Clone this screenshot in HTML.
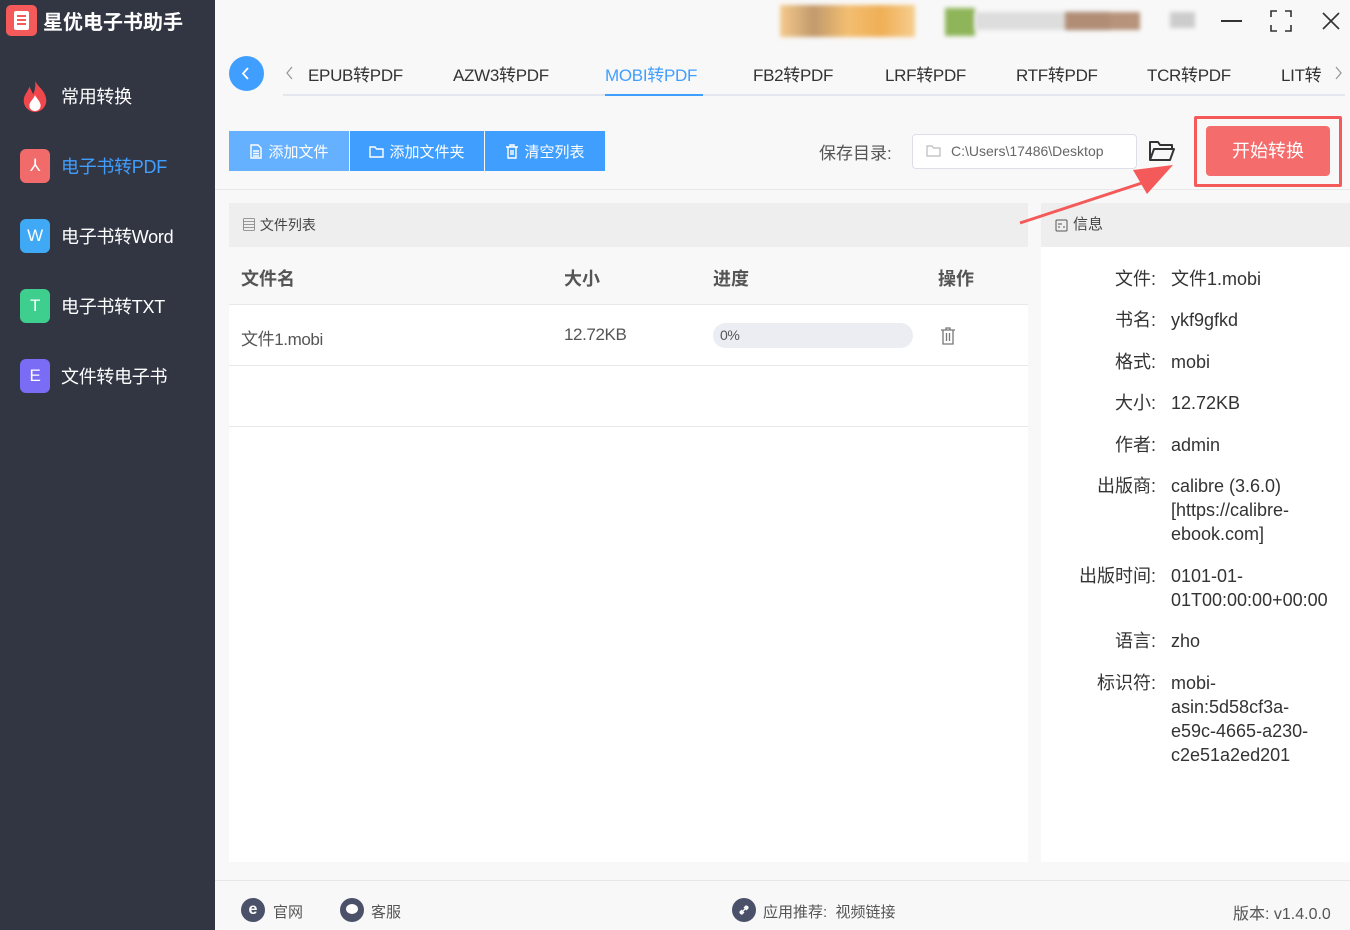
<!DOCTYPE html>
<html><head><meta charset="utf-8"><style>
*{margin:0;padding:0;box-sizing:border-box}
body{width:1350px;height:930px;overflow:hidden;background:#f8f8f8;font-family:"Liberation Sans","Noto Sans CJK SC",sans-serif;position:relative;color:#333}
.a{position:absolute}
.side{left:0;top:0;width:215px;height:930px;background:#323643}
.nav{left:20px;font-size:18px;color:#fff;display:flex;align-items:center;letter-spacing:-0.3px}
.ic{width:30px;height:34px;border-radius:6px;margin-right:11px;color:#fff;font-size:17px;display:flex;align-items:center;justify-content:center}
.tab{top:61px;font-size:17px;color:#333;letter-spacing:-0.3px}
.btn{top:131px;height:40px;background:#409eff;color:#fff;font-size:15px;display:flex;align-items:center;justify-content:center;gap:5px}
.info{font-size:18px;color:#333;line-height:24px}
.lab{position:absolute;right:194px;text-align:right;white-space:nowrap}
.val{position:absolute;left:1171px;width:170px}
</style></head><body>
<div class="a side"></div>
<div class="a" style="left:6px;top:5px;width:31px;height:31px;background:#f55a5a;border-radius:5px"><div style="position:absolute;left:8px;top:6px;width:15px;height:19px;background:#fff;border-radius:2px"></div><div style="position:absolute;left:11px;top:10px;width:9px;height:2px;background:#f55a5a;box-shadow:0 4px #f55a5a,0 8px #f55a5a"></div></div>
<div class="a" style="left:43px;top:6px;font-size:20px;font-weight:bold;color:#fff">星优电子书助手</div>
<div class="a nav" style="top:79px"><div class="ic" style="background:transparent"><svg width="32" height="36" viewBox="0 0 32 36"><path d="M16 1C18 8 28 12 28 23 28 30 22 35 16 35 10 35 4 30 4 23 4 16 9 13 10 8 12 12 13 14 14 16 16 12 17 6 16 1Z" fill="#f0474c"/><path d="M16 17C18 21 22 24 22 28 22 32 19 34 16 34 13 34 10 32 10 28 10 24 14 22 16 17Z" fill="#fff"/></svg></div>常用转换</div>
<div class="a nav" style="top:149px;color:#409eff"><div class="ic" style="background:#f26b6b">⅄</div>电子书转PDF</div>
<div class="a nav" style="top:219px"><div class="ic" style="background:#3fa9f5">W</div>电子书转Word</div>
<div class="a nav" style="top:289px"><div class="ic" style="background:#3ecf8e">T</div>电子书转TXT</div>
<div class="a nav" style="top:359px"><div class="ic" style="background:#7b6cf6">E</div>文件转电子书</div>

<div class="a" style="left:780px;top:5px;width:135px;height:32px;background:linear-gradient(90deg,#f6c27a,#b88a55,#f2b45a,#eea33a,#f7c77e);filter:blur(2px);opacity:.85"></div>
<div class="a" style="left:945px;top:8px;width:30px;height:28px;background:#8fb55a;filter:blur(2px)"></div>
<div class="a" style="left:975px;top:12px;width:135px;height:18px;background:#ddd;filter:blur(2px)"></div>
<div class="a" style="left:1065px;top:12px;width:75px;height:18px;background:#a77a5c;filter:blur(2px);opacity:.8"></div>
<div class="a" style="left:1170px;top:12px;width:25px;height:16px;background:#ccc;filter:blur(2px)"></div>
<div class="a" style="left:1221px;top:20px;width:21px;height:2px;background:#333"></div>
<svg class="a" style="left:1270px;top:10px" width="22" height="22"><path d="M1 7V1H7M15 1H21V7M21 15V21H15M7 21H1V15" fill="none" stroke="#333" stroke-width="1.6"/></svg>
<svg class="a" style="left:1322px;top:12px" width="18" height="18"><path d="M1 1L17 17M17 1L1 17" stroke="#333" stroke-width="1.6"/></svg>

<div class="a" style="left:229px;top:56px;width:35px;height:35px;border-radius:50%;background:#409eff"><svg width="35" height="35"><path d="M19 12L14 17.5L19 23" fill="none" stroke="#fff" stroke-width="1.8"/></svg></div>
<svg class="a" style="left:284px;top:65px" width="10" height="16"><path d="M8 2L3 8L8 14" fill="none" stroke="#999" stroke-width="1.3"/></svg>
<svg class="a" style="left:1334px;top:65px" width="10" height="16"><path d="M2 2L7 8L2 14" fill="none" stroke="#999" stroke-width="1.3"/></svg>
<div class="a" style="left:283px;top:94px;width:1062px;height:2px;background:#e4e7ed"></div>
<div class="a tab" style="left:308px">EPUB转PDF</div>
<div class="a tab" style="left:453px">AZW3转PDF</div>
<div class="a tab" style="left:605px;color:#409eff">MOBI转PDF</div>
<div class="a" style="left:605px;top:94px;width:98px;height:2px;background:#409eff"></div>
<div class="a tab" style="left:753px">FB2转PDF</div>
<div class="a tab" style="left:885px">LRF转PDF</div>
<div class="a tab" style="left:1016px">RTF转PDF</div>
<div class="a tab" style="left:1147px">TCR转PDF</div>
<div class="a tab" style="left:1281px">LIT转</div>

<div class="a btn" style="left:229px;width:120px;background:#66b1ff"><svg width="14" height="15"><path d="M2 1H9L12 4V14H2Z M4 7H10M4 9.5H10M4 12H10" fill="none" stroke="#fff" stroke-width="1.4"/></svg>添加文件</div>
<div class="a btn" style="left:350px;width:134px"><svg width="15" height="13"><path d="M1 2H6L7.5 4H14V12H1Z" fill="none" stroke="#fff" stroke-width="1.4"/></svg>添加文件夹</div>
<div class="a btn" style="left:485px;width:120px"><svg width="14" height="15"><path d="M1 3H13M5 3V1H9V3M3 3V14H11V3M6 6V11M8 6V11" fill="none" stroke="#fff" stroke-width="1.4"/></svg>清空列表</div>
<div class="a" style="left:819px;top:139px;font-size:17px;color:#555">保存目录:</div>
<div class="a" style="left:912px;top:134px;width:225px;height:35px;background:#fff;border:1px solid #dcdfe6;border-radius:4px;font-size:14px;color:#666;line-height:33px;padding-left:38px">C:\Users\17486\Desktop</div>
<svg class="a" style="left:926px;top:144px" width="15" height="13"><path d="M1 2H6L7.5 4H14V12H1Z" fill="none" stroke="#bbb" stroke-width="1.2"/></svg>
<svg class="a" style="left:1148px;top:140px" width="28" height="22"><path d="M2 20V2H10L12 5H24V9M2 20L6 9H26L22 20Z" fill="none" stroke="#333" stroke-width="2" stroke-linejoin="round"/></svg>
<div class="a" style="left:1194px;top:116px;width:148px;height:71px;border:3px solid #f55a5a;border-radius:2px"></div>
<div class="a" style="left:1206px;top:126px;width:124px;height:50px;background:#f46c6c;border-radius:4px;color:#fff;font-size:18px;text-align:center;line-height:50px">开始转换</div>
<div class="a" style="left:215px;top:189px;width:1135px;height:1px;background:#e8e8e8"></div>

<div class="a" style="left:229px;top:203px;width:799px;height:659px;background:#fff"></div>
<div class="a" style="left:229px;top:203px;width:799px;height:44px;background:#eeeeee;font-size:14px;color:#444;line-height:44px;padding-left:13px">▤ 文件列表</div>
<div class="a" style="left:229px;top:247px;width:799px;height:58px;background:#f8f8f8;border-bottom:1px solid #e8e8e8;font-size:18px;font-weight:bold;color:#555"><span class="a" style="left:12px;top:18px">文件名</span><span class="a" style="left:335px;top:18px">大小</span><span class="a" style="left:484px;top:18px">进度</span><span class="a" style="left:709px;top:18px">操作</span></div>
<div class="a" style="left:229px;top:306px;width:799px;height:60px;border-bottom:1px solid #e8e8e8;font-size:17px;color:#555;letter-spacing:-0.4px"><span class="a" style="left:12px;top:19px">文件1.mobi</span><span class="a" style="left:335px;top:19px">12.72KB</span><span class="a" style="left:484px;top:17px;width:200px;height:25px;border-radius:13px;background:#ebedf3;font-size:14px;line-height:25px;padding-left:7px">0%</span><svg class="a" style="left:711px;top:21px" width="16" height="18"><path d="M1 3H15M6 3V1H10V3M3 3V17H13V3M6.5 6V14M9.5 6V14" fill="none" stroke="#777" stroke-width="1.3"/></svg></div>
<div class="a" style="left:229px;top:426px;width:799px;height:1px;background:#e8e8e8"></div>

<div class="a" style="left:1041px;top:203px;width:309px;height:659px;background:#fff"></div>
<div class="a" style="left:1041px;top:203px;width:309px;height:44px;background:#eeeeee;font-size:15px;color:#444;line-height:44px;padding-left:32px">信息</div>
<svg class="a" style="left:1055px;top:219px" width="13" height="13"><rect x="1" y="1" width="11" height="11" rx="1" fill="none" stroke="#555"/><path d="M3 5H7M3 8H5M8 8H10" stroke="#555"/></svg>
<svg class="a" style="left:1015px;top:160px" width="165" height="70"><path d="M5 63L130 22" stroke="#f55a5a" stroke-width="3"/><path d="M158 5L118 10L132 34Z" fill="#f55a5a"/></svg>
<div class="info">
<span class="lab" style="top:267px">文件:</span><span class="val a" style="top:267px">文件1.mobi</span>
<span class="lab" style="top:308px">书名:</span><span class="val a" style="top:308px">ykf9gfkd</span>
<span class="lab" style="top:350px">格式:</span><span class="val a" style="top:350px">mobi</span>
<span class="lab" style="top:391px">大小:</span><span class="val a" style="top:391px">12.72KB</span>
<span class="lab" style="top:433px">作者:</span><span class="val a" style="top:433px">admin</span>
<span class="lab" style="top:474px">出版商:</span><span class="val a" style="top:474px">calibre (3.6.0) [https://calibre-ebook.com]</span>
<span class="lab" style="top:564px">出版时间:</span><span class="val a" style="top:564px">0101-01-<br>01T00:00:00+00:00</span>
<span class="lab" style="top:629px">语言:</span><span class="val a" style="top:629px">zho</span>
<span class="lab" style="top:671px">标识符:</span><span class="val a" style="top:671px">mobi-<br>asin:5d58cf3a-<br>e59c-4665-a230-<br>c2e51a2ed201</span>
</div>

<div class="a" style="left:215px;top:880px;width:1135px;height:1px;background:#e6e6e6"></div>
<div class="a" style="left:241px;top:898px;width:24px;height:24px;border-radius:50%;background:#4a5168;color:#fff;font-size:16px;text-align:center;line-height:23px;font-weight:bold">e</div>
<div class="a" style="left:273px;top:901px;font-size:15px;color:#555">官网</div>
<div class="a" style="left:340px;top:898px;width:24px;height:24px;border-radius:50%;background:#4a5168"></div>
<div class="a" style="left:346px;top:904px;width:12px;height:10px;border-radius:50%;background:#fff"></div>
<div class="a" style="left:371px;top:901px;font-size:15px;color:#555">客服</div>
<div class="a" style="left:732px;top:898px;width:24px;height:24px;border-radius:50%;background:#4a5168"><svg width="24" height="24"><path d="M9 15L15 9M10 12L8 14A2 2 0 0 0 10 16L12 14M14 12L16 10A2 2 0 0 0 14 8L12 10" fill="none" stroke="#fff" stroke-width="1.3"/></svg></div>
<div class="a" style="left:763px;top:901px;font-size:15px;color:#555">应用推荐:&nbsp; 视频链接</div>
<div class="a" style="left:1233px;top:900px;font-size:16px;color:#555">版本: v1.4.0.0</div>
</body></html>
